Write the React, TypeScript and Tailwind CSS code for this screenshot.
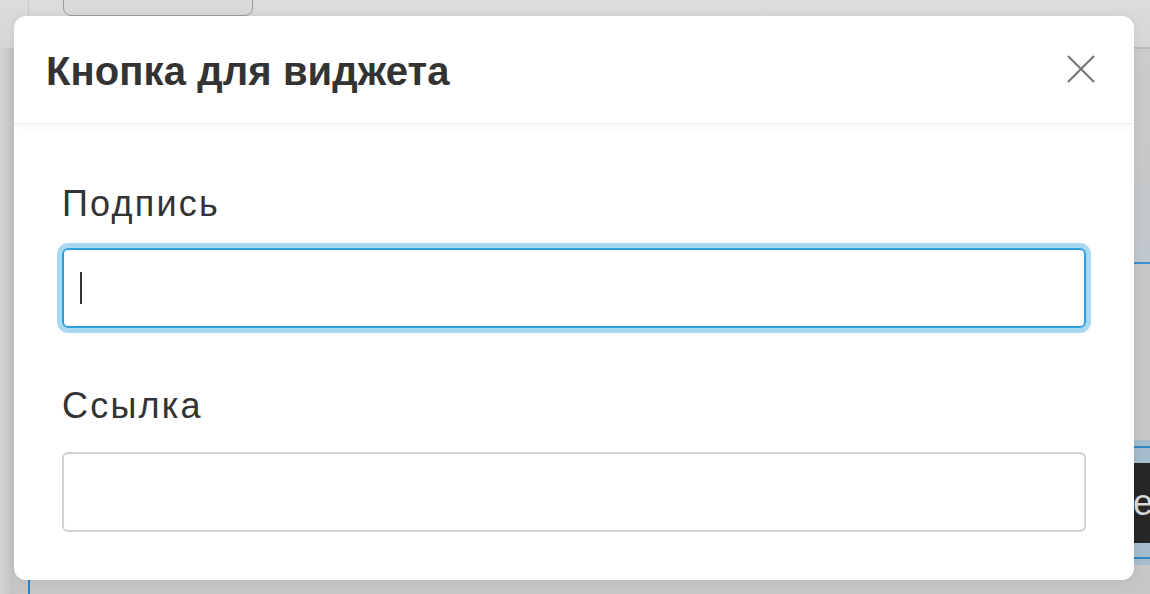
import React from "react";

export default function App() {
  return (
    <div className="relative w-[1150px] h-[594px] overflow-hidden bg-[#c6c6c6]" style={{ fontFamily: '"Liberation Sans", Arial, sans-serif' }}>
      {/* dimmed page behind the dialog */}
      <div className="absolute inset-x-0 top-0 h-[48px] bg-gradient-to-b from-[#dcdcdc] to-[#d6d6d6]" />
      <div className="absolute left-0 top-[48px] bottom-0 w-[14px] bg-gradient-to-r from-[#d4d4d4] to-[#c2c2c2]" />
      <div className="absolute left-[28px] top-0 h-[16px] w-[1px] bg-[#c9c9c9]" />
      <div className="absolute left-[28px] top-[580px] h-[14px] w-[2px] bg-[#2b86c8]" />
      <div className="absolute left-[63px] top-[-10px] w-[190px] h-[26px] rounded-b-[8px] border border-[#9c9c9c] bg-[#dadada]" />
      <div className="absolute right-0 top-[47px] w-[16px] h-[2px] bg-[#b9b9b9]" />
      <div className="absolute right-0 top-[49px] w-[16px] h-[213px] bg-gradient-to-b from-[#cbcbcb] via-[#c8c8c8] to-[#bfc7cd]" />
      <div className="absolute right-0 top-[262px] w-[16px] h-[2px] bg-[#3a8fca]" />
      <div className="absolute right-0 top-[440px] w-[16px] h-[125px] bg-[#a4bccc] flex flex-col justify-between py-[6px]">
        <div className="h-[2px] bg-[#2f88c6]" />
        <div className="h-[80px] bg-[#262626] overflow-hidden flex items-center">
          <span className="text-[36px] leading-[48px] text-[#d8d8d8] ml-[-1px]">е</span>
        </div>
        <div className="h-[2px] bg-[#2f88c6]" />
      </div>

      {/* dialog */}
      <div className="absolute left-[14px] top-[16px] w-[1120px] h-[564px] rounded-[12px] bg-white shadow-[0_0_10px_rgba(0,0,0,0.08)] flex flex-col overflow-hidden">
        <div className="h-[108px] shrink-0 flex items-center justify-between pl-[32px] pr-[38px] border-b border-[#ececec] shadow-[0_3px_8px_rgba(0,0,0,0.035)] relative z-10">
          <h2 className="text-[40px] leading-[48px] font-bold text-[#333333] mt-[3px] tracking-[0.1px]">Кнопка для виджета</h2>
          <button className="w-[30px] h-[30px] flex items-center justify-center mt-[-2px]" aria-label="Закрыть">
            <svg width="30" height="30" viewBox="0 0 30 30" fill="none" stroke="#737373" strokeWidth="2">
              <path d="M2 2 L28 28 M28 2 L2 28" />
            </svg>
          </button>
        </div>
        <div className="flex flex-col px-[48px] pt-[58px]">
          <label className="text-[36px] leading-[43px] text-[#333333] tracking-[2.2px]">Подпись</label>
          <div className="mt-[23px] h-[80px] rounded-[6px] border-2 border-[#2d9fe0] shadow-[0_0_0_5px_#a8d9f1] flex items-center pl-[16px]">
            <span className="block w-[2px] h-[32px] bg-[#333333]" />
          </div>
          <label className="mt-[56px] text-[36px] leading-[43px] text-[#333333] tracking-[2.2px]">Ссылка</label>
          <div className="mt-[25px] h-[80px] rounded-[6px] border-2 border-[#d0d0d0]" />
        </div>
      </div>
    </div>
  );
}
